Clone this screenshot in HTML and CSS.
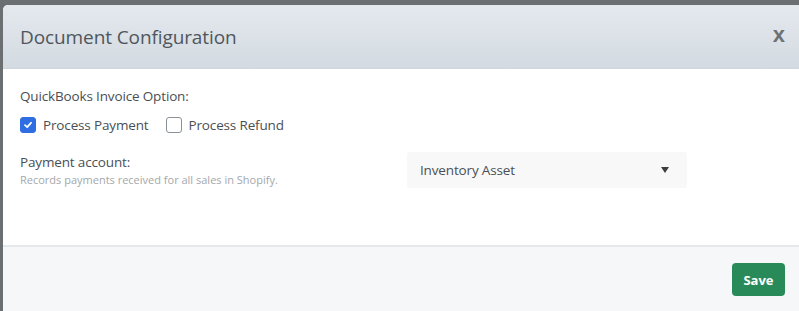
FILE: index.html
```html
<!DOCTYPE html>
<html lang="en">
<head>
    <meta charset="UTF-8">
    <meta name="viewport" content="width=device-width, initial-scale=1.0">
    <title>Document Configuration</title>
    <link rel="stylesheet" href="styles.css">
</head>
<body>
    <div class="backdrop">
        <div class="modal">
            <div class="modal-header">
                <h2 class="modal-title">Document Configuration</h2>
                <button class="close-button">x</button>
            </div>
            <div class="modal-body">
                <div class="option-label">QuickBooks Invoice Option:</div>
                <div class="check-row">
                    <label class="check">
                        <span class="box checked">
                            <svg width="10" height="10" viewBox="0 0 10 10"><path d="M2 5.2 L4.2 7.2 L8 2.8" fill="none" stroke="#fff" stroke-width="1.8" stroke-linecap="round" stroke-linejoin="round"/></svg>
                        </span>
                        Process Payment
                    </label>
                    <label class="check">
                        <span class="box"></span>
                        Process Refund
                    </label>
                </div>
                <div class="field-row">
                    <div class="field-text">
                        <div class="field-label">Payment account:</div>
                        <div class="field-help">Records payments received for all sales in Shopify.</div>
                    </div>
                    <div class="select">
                        <span>Inventory Asset</span>
                        <span class="caret"></span>
                    </div>
                </div>
            </div>
            <div class="modal-footer">
                <button class="save-button">Save</button>
            </div>
        </div>
    </div>
</body>
</html>
```

FILE: styles.css
```css
body {
    margin: 0;
    padding: 0;
    font-family: "Open Sans", "Noto Sans", sans-serif;
    background-color: #6c6f71;
}

.backdrop {
    padding: 5px 0 0 3px;
    height: 311px;
    box-sizing: border-box;
}

.modal {
    background-color: #fff;
    border-radius: 5px 0 0 0;
    height: 306px;
    display: flex;
    flex-direction: column;
    overflow: hidden;
}

.modal-header {
    height: 63px;
    display: flex;
    align-items: center;
    justify-content: space-between;
    padding: 0 14px 0 17px;
    background: linear-gradient(to bottom, #e4e9ee, #d3dae1);
    border-bottom: 1px solid #cfd6dd;
}

.modal-title {
    margin: 0;
    font-size: 19px;
    font-weight: normal;
    color: #50565c;
    letter-spacing: -0.1px;
}

.close-button {
    border: none;
    background: none;
    font-family: "Liberation Sans", Arial, sans-serif;
    font-size: 22px;
    font-weight: bold;
    color: #6d7174;
    padding: 0;
    margin-top: -3px;
    cursor: pointer;
}

.modal-body {
    flex: 1;
    padding: 17px 17px 0 17px;
    color: #4a4f54;
    font-size: 13.5px;
    letter-spacing: -0.15px;
}

.option-label {
    line-height: 20px;
}

.check-row {
    display: flex;
    gap: 17px;
    margin-top: 9px;
    line-height: 20px;
}

.check {
    display: flex;
    align-items: center;
    gap: 7px;
}

.box {
    width: 14px;
    height: 14px;
    border: 1px solid #8b9096;
    border-radius: 3px;
    display: flex;
    align-items: center;
    justify-content: center;
}

.box.checked {
    background-color: #2f6de2;
    border-color: #2f6de2;
}

.field-row {
    display: flex;
    align-items: center;
    margin-top: 17px;
}

.field-text {
    width: 387px;
}

.field-label {
    line-height: 20px;
}

.field-help {
    font-size: 11px;
    color: #a4a8ac;
    line-height: 16px;
    letter-spacing: 0;
}

.select {
    width: 280px;
    height: 36px;
    box-sizing: border-box;
    background-color: #f8f8f8;
    border-radius: 3px;
    display: flex;
    align-items: center;
    justify-content: space-between;
    padding: 0 18px 0 13px;
    color: #4a4f54;
}

.caret {
    width: 0;
    height: 0;
    border-left: 4px solid transparent;
    border-right: 4px solid transparent;
    border-top: 6px solid #3c3f42;
}

.modal-footer {
    height: 64px;
    border-top: 2px solid #e6e9ec;
    background-color: #f6f7f9;
    display: flex;
    align-items: center;
    justify-content: flex-end;
    padding-right: 14px;
}

.save-button {
    background-color: #288a59;
    color: #fff;
    border: none;
    border-radius: 4px;
    width: 53px;
    height: 33px;
    font-family: "Open Sans", sans-serif;
    font-size: 13px;
    font-weight: bold;
    cursor: pointer;
    margin-top: 1px;
}
```
